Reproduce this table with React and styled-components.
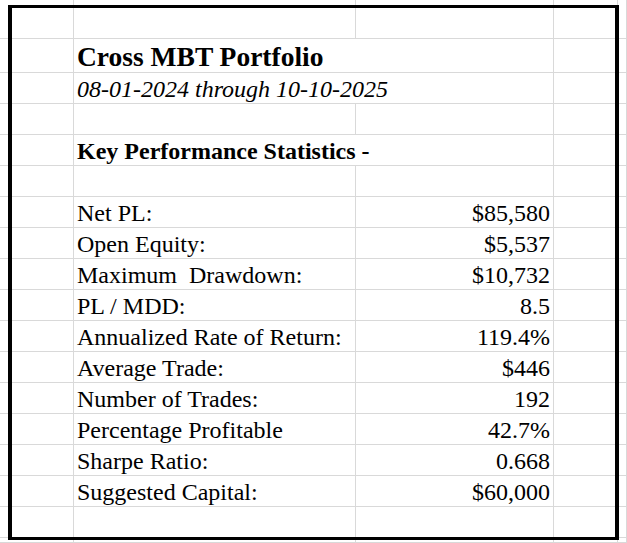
import styled, { createGlobalStyle } from 'styled-components'

const GlobalStyle = createGlobalStyle`
  html, body {
    margin: 0;
    padding: 0;
    background: #fff;
  }
  body {
    font-family: "Liberation Serif", "Times New Roman", serif;
    color: #000;
    overflow: hidden;
  }
`

const GRID = '#d9d9d9'

const Sheet = styled.div`
  position: relative;
  width: 627px;
  height: 543px;
  overflow: hidden;
  display: grid;
  grid-template-columns: 74px 282px 198px 64px 1fr;
  grid-template-rows: 39px 34px repeat(15, 31px) 1fr;
`

const Cell = styled.div`
  box-sizing: border-box;
  display: flex;
  align-items: flex-end;
  justify-content: ${(p) => (p.$right ? 'flex-end' : 'flex-start')};
  grid-column: ${(p) => (p.$span ? `span ${p.$span}` : 'auto')};
  padding: 0 ${(p) => (p.$right ? '3px' : '0')} 2px ${(p) => (p.$right ? '0' : '3px')};
  border-right: 1px solid ${GRID};
  border-bottom: 1px solid ${GRID};
  white-space: pre;
  overflow: visible;
  font-size: ${(p) => p.$size || 24}px;
  font-weight: ${(p) => (p.$bold ? 700 : 400)};
  font-style: ${(p) => (p.$italic ? 'italic' : 'normal')};
  line-height: 1;
`

const Frame = styled.div`
  position: absolute;
  left: 8px;
  top: 5px;
  width: 611px;
  height: 535px;
  box-sizing: border-box;
  border-style: solid;
  border-color: #000;
  border-width: 3px 4px 3px 4px;
  pointer-events: none;
`

const stats = [
  ['Net PL:', '$85,580'],
  ['Open Equity:', '$5,537'],
  ['Maximum  Drawdown:', '$10,732'],
  ['PL / MDD:', '8.5'],
  ['Annualized Rate of Return:', '119.4%'],
  ['Average Trade:', '$446'],
  ['Number of Trades:', '192'],
  ['Percentage Profitable', '42.7%'],
  ['Sharpe Ratio:', '0.668'],
  ['Suggested Capital:', '$60,000'],
]

function EmptyRow() {
  return (
    <>
      <Cell />
      <Cell />
      <Cell />
      <Cell />
      <Cell />
    </>
  )
}

function TextRow({ children, ...props }) {
  return (
    <>
      <Cell />
      <Cell $span={2} {...props}>
        {children}
      </Cell>
      <Cell />
      <Cell />
    </>
  )
}

function StatRow({ label, value }) {
  return (
    <>
      <Cell />
      <Cell>{label}</Cell>
      <Cell $right>{value}</Cell>
      <Cell />
      <Cell />
    </>
  )
}

export default function App() {
  return (
    <>
      <GlobalStyle />
      <Sheet>
        <EmptyRow />
        <TextRow $bold $size={27.5}>
          Cross MBT Portfolio
        </TextRow>
        <TextRow $italic>08-01-2024 through 10-10-2025</TextRow>
        <EmptyRow />
        <TextRow $bold>Key Performance Statistics -</TextRow>
        <EmptyRow />
        {stats.map(([label, value]) => (
          <StatRow key={label} label={label} value={value} />
        ))}
        <EmptyRow />
        <EmptyRow />
        <Frame />
      </Sheet>
    </>
  )
}
